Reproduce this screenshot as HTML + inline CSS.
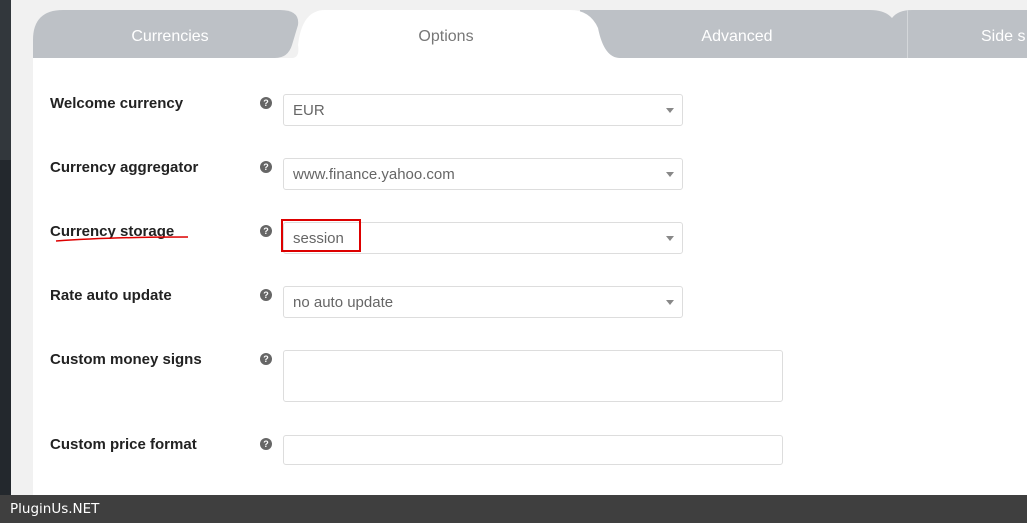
<!DOCTYPE html>
<html><head><style>
body{margin:0;width:1027px;height:523px;overflow:hidden;background:#f1f1f1;font-family:"Liberation Sans",Arial,sans-serif;position:relative}
.lb{position:absolute;left:0;top:0;width:11px;height:523px;background:#23282d}
.lb2{position:absolute;left:0;top:0;width:11px;height:160px;background:#32373c}
.main{position:absolute;left:33px;top:58px;width:994px;height:440px;background:#fff}
.tabs{position:absolute;left:0;top:0}
.lbl{position:absolute;left:50px;font-weight:bold;font-size:15px;color:#222}
.q{position:absolute;left:260px;width:12px;height:12px;border-radius:50%;background:#666;color:#fff;font-size:9px;font-weight:bold;text-align:center;line-height:12px}
.sel{position:absolute;left:283px;width:400px;border:1px solid #ddd;border-radius:3px;background:#fff;font-size:15px;color:#666;line-height:31px;box-sizing:border-box;padding-left:9px;height:32px}
.sel:after{content:"";position:absolute;right:8px;top:13px;border-left:4px solid transparent;border-right:4px solid transparent;border-top:5px solid #888}
.foot{position:absolute;left:0;top:495px;width:1027px;height:28px;background:#3f3f3f;color:#fff;font-family:"DejaVu Sans",sans-serif;font-size:13.5px;line-height:28px;padding-left:10px;box-sizing:border-box}
</style></head><body>
<div class="lb"></div><div class="lb2"></div>
<div class="main"></div>
<svg class="tabs" width="1027" height="60">
<path d="M33 58 V40 Q33 10 63 10 H280 Q300 10 298 25 L292 45 Q288 58 275 58 Z" fill="#bdc1c6"/>
<path d="M580 58 V10 H870 Q885 10 892 18 Q898 10 912 10 H1027 V58 Z" fill="#bdc1c6"/>
<path d="M292 58 Q300 58 298 45 Q302 10 325 10 H570 Q590 10 598 28 Q604 58 620 58 Z" fill="#fff"/>
<line x1="907.5" y1="10" x2="907.5" y2="58" stroke="#d4d7da"/>
<text x="170" y="41" font-size="16" fill="#fff" text-anchor="middle" font-family="Liberation Sans">Currencies</text>
<text x="446" y="41" font-size="16" fill="#777" text-anchor="middle" font-family="Liberation Sans">Options</text>
<text x="737" y="41" font-size="16" fill="#fff" text-anchor="middle" font-family="Liberation Sans">Advanced</text>
<text x="981" y="41" font-size="16" fill="#fff" font-family="Liberation Sans">Side s</text>
</svg>
<div class="lbl" style="top:95px">Welcome currency</div><div class="q" style="top:97px">?</div><div class="sel" style="top:94px">EUR</div>
<div class="lbl" style="top:159px">Currency aggregator</div><div class="q" style="top:161px">?</div><div class="sel" style="top:158px">www.finance.yahoo.com</div>
<div class="lbl" style="top:223px">Currency storage</div><div class="q" style="top:225px">?</div><div class="sel" style="top:222px">session</div>
<div style="position:absolute;left:281px;top:219px;width:76px;height:29px;border:2px solid #d00"></div>
<svg style="position:absolute;left:50px;top:234px" width="140" height="10"><path d="M6 7 Q60 3 138 3" stroke="#d00" stroke-width="1.5" fill="none"/></svg>
<div class="lbl" style="top:287px">Rate auto update</div><div class="q" style="top:289px">?</div><div class="sel" style="top:286px">no auto update</div>
<div class="lbl" style="top:351px">Custom money signs</div><div class="q" style="top:353px">?</div>
<div style="position:absolute;left:283px;top:350px;width:500px;height:52px;border:1px solid #ddd;border-radius:3px;box-sizing:border-box"></div>
<div class="lbl" style="top:436px">Custom price format</div><div class="q" style="top:438px">?</div>
<div style="position:absolute;left:283px;top:435px;width:500px;height:30px;border:1px solid #ddd;border-radius:3px;box-sizing:border-box"></div>
<div class="foot">PluginUs.NET</div>
</body></html>
